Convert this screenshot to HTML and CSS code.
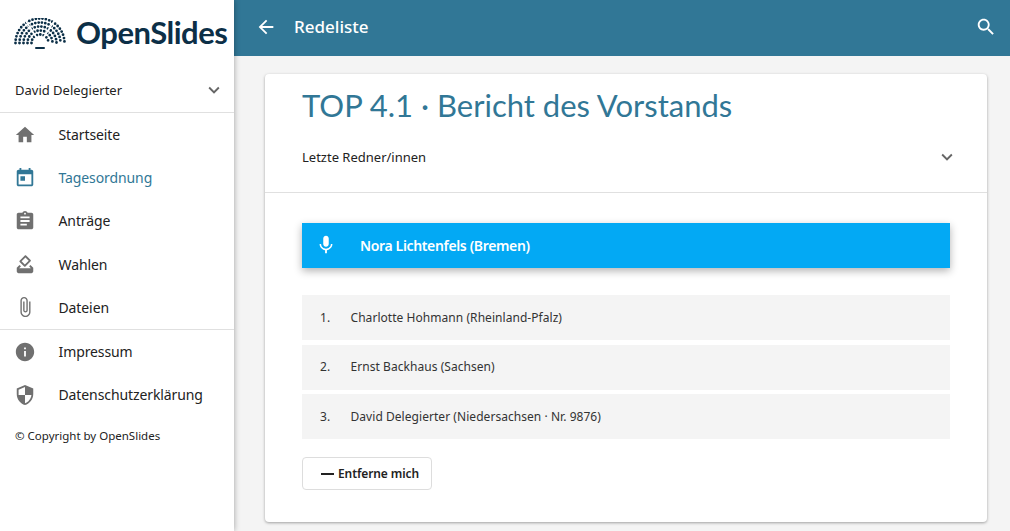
FILE: index.html
```html
<!DOCTYPE html>
<html>

<head>
  <meta charset="UTF-8">
  <meta name="viewport" content="width=device-width, initial-scale=1">
  <title>Redeliste</title>
  <link rel="stylesheet" href="styles.css">
</head>

<body>
  <aside class="sidebar">
    <div class="logo">
      <svg class="logo-mark" viewBox="0 0 52 34" width="52" height="34">
        <g fill="none" stroke="#0c2f47" stroke-width="2.8" stroke-linecap="round" stroke-dasharray="0 3.4">
          <path d="M1.5 25a24.5 24.5 0 0 1 49 0"/>
          <path d="M5.5 25a20.500 20.500 0 0 1 41 0"/>
          <path d="M9.500 25a16.500 16.500 0 0 1 33 0"/>
          <path d="M13.500 25a12.500 12.500 0 0 1 25 0"/>
          <path d="M17.500 25a8.500 8.500 0 0 1 17 0"/>
        </g>
        <g stroke="#fff" stroke-width="1.600">
          <path d="M26 25 10 0"/>
          <path d="M26 25 42 0"/>
        </g>
        <rect x="21" y="29" width="10" height="2" rx="1" fill="#0c2f47"/>
      </svg>
      <span class="logo-text">OpenSlides</span>
    </div>

    <div class="user">
      <span>David Delegierter</span>
      <svg class="icon-sm" viewBox="0 0 24 24"><path d="M7.410 8.590 12 13.170l4.590-4.580L18 10l-6 6-6-6z"/></svg>
    </div>

    <nav class="nav nav-main">
      <a class="nav-item">
        <svg class="icon" viewBox="0 0 24 24"><path d="M10 20v-6h4v6h5v-8h3L12 3 2 12h3v8z"/></svg>
        <span>Startseite</span>
      </a>
      <a class="nav-item active">
        <svg class="icon" viewBox="0 0 24 24"><path d="M19 3h-1V1h-2v2H8V1H6v2H5c-1.110 0-2 .9-2 2v14c0 1.100.89 2 2 2h14c1.100 0 2-.9 2-2V5c0-1.100-.9-2-2-2zm0 16H5V8h14v11zM7 10h5v5H7z"/></svg>
        <span>Tagesordnung</span>
      </a>
      <a class="nav-item">
        <svg class="icon" viewBox="0 0 24 24"><path d="M19 3h-4.180C14.400 1.840 13.300 1 12 1c-1.300 0-2.400.84-2.820 2H5c-1.100 0-2 .9-2 2v14c0 1.100.9 2 2 2h14c1.100 0 2-.9 2-2V5c0-1.100-.9-2-2-2zm-7 0c.55 0 1 .45 1 1s-.45 1-1 1-1-.45-1-1 .45-1 1-1zm2 14H7v-2h7v2zm3-4H7v-2h10v2zm0-4H7V7h10v2z"/></svg>
        <span>Anträge</span>
      </a>
      <a class="nav-item">
        <svg class="icon" viewBox="0 0 24 24"><path d="m18 13-1.500 1.500 1.900 2H5.600l2-2L6 13l-3 3v4c0 1.100.9 2 2 2h14c1.100 0 2-.9 2-2v-4l-3-3zm-6.900 1.700c.39.39 1.020.39 1.410 0l5.660-5.660c.39-.39.39-1.020 0-1.410L13.220 2.700c-.38-.4-1.010-.41-1.400-.02L6.150 8.340c-.39.39-.39 1.020 0 1.410l4.950 4.950zm1.410-9.900 3.540 3.540-4.250 4.240-3.530-3.530 4.240-4.250z"/></svg>
        <span>Wahlen</span>
      </a>
      <a class="nav-item">
        <svg class="icon" viewBox="0 0 24 24"><path d="M16.500 6v11.500c0 2.210-1.790 4-4 4s-4-1.790-4-4V5c0-1.380 1.120-2.500 2.500-2.500s2.500 1.120 2.500 2.500v10.500c0 .55-.45 1-1 1s-1-.45-1-1V6H10v9.500c0 1.380 1.120 2.500 2.500 2.500s2.500-1.120 2.500-2.500V5c0-2.210-1.790-4-4-4S7 2.790 7 5v12.500c0 3.040 2.460 5.500 5.500 5.500s5.500-2.460 5.500-5.500V6h-1.500z"/></svg>
        <span>Dateien</span>
      </a>
    </nav>

    <nav class="nav">
      <a class="nav-item">
        <svg class="icon" viewBox="0 0 24 24"><path d="M12 2C6.480 2 2 6.480 2 12s4.480 10 10 10 10-4.480 10-10S17.520 2 12 2zm1 15h-2v-6h2v6zm0-8h-2V7h2v2z"/></svg>
        <span>Impressum</span>
      </a>
      <a class="nav-item">
        <svg class="icon" viewBox="0 0 24 24"><path d="M12 1 3 5v6c0 5.550 3.840 10.740 9 12 5.160-1.260 9-6.450 9-12V5l-9-4zm0 10.990h7c-.53 4.120-3.280 7.790-7 8.940V12H5V6.300l7-3.110v8.800z"/></svg>
        <span>Datenschutzerklärung</span>
      </a>
    </nav>

    <div class="copyright">© Copyright by OpenSlides</div>
  </aside>

  <div class="main">
    <header class="topbar">
      <div class="topbar-left">
        <svg class="icon-white" viewBox="0 0 24 24"><path d="M20 11H7.830l5.590-5.590L12 4l-8 8 8 8 1.410-1.410L7.830 13H20v-2z"/></svg>
        <span class="topbar-title">Redeliste</span>
      </div>
      <svg class="icon-white" viewBox="0 0 24 24"><path d="M15.500 14h-.79l-.28-.27C15.410 12.590 16 11.110 16 9.500 16 5.910 13.090 3 9.500 3S3 5.910 3 9.500 5.910 16 9.500 16c1.610 0 3.090-.59 4.230-1.570l.27.28v.79l5 4.990L20.490 19l-4.990-5zm-6 0C7.010 14 5 11.990 5 9.500S7.010 5 9.500 5 14 7.010 14 9.500 11.990 14 9.500 14z"/></svg>
    </header>

    <main class="content">
      <section class="card">
        <div class="card-head">
          <h1>TOP 4.1 · Bericht des Vorstands</h1>
          <div class="last-speakers">
            <span>Letzte Redner/innen</span>
            <svg class="icon-sm" viewBox="0 0 24 24"><path d="M7.410 8.590 12 13.170l4.590-4.580L18 10l-6 6-6-6z"/></svg>
          </div>
        </div>
        <div class="card-body">
          <div class="current">
            <svg class="icon-mic" viewBox="0 0 24 24"><path d="M12 14c1.660 0 2.990-1.340 2.990-3L15 5c0-1.660-1.340-3-3-3S9 3.340 9 5v6c0 1.660 1.340 3 3 3zm5.300-3c0 3-2.540 5.100-5.300 5.100S6.700 14 6.700 11H5c0 3.410 2.720 6.230 6 6.720V21h2v-3.280c3.280-.48 6-3.300 6-6.720h-1.700z"/></svg>
            <span>Nora Lichtenfels (Bremen)</span>
          </div>
          <ol class="waiting">
            <li><span class="num">1.</span><span>Charlotte Hohmann (Rheinland-Pfalz)</span></li>
            <li><span class="num">2.</span><span>Ernst Backhaus (Sachsen)</span></li>
            <li><span class="num">3.</span><span>David Delegierter (Niedersachsen · Nr. 9876)</span></li>
          </ol>
          <button class="remove-btn"><span class="dash"></span>Entferne mich</button>
        </div>
      </section>
    </main>
  </div>
</body>

</html>
```

FILE: styles.css
```css
html, body {
  height: 100%;
}

body {
  margin: 0;
  display: flex;
  overflow: hidden;
  font-family: 'Noto Sans', 'Open Sans', sans-serif;
  font-size: 14px;
  color: #222;
  background-color: #f4f4f4;
}

svg {
  display: block;
  flex-shrink: 0;
  fill: currentColor;
}

.sidebar {
  width: 234px;
  flex-shrink: 0;
  background-color: #fff;
  box-shadow: 0 0 6px rgba(0, 0, 0, 0.35);
  position: relative;
  z-index: 2;
}

.logo {
  height: 66px;
  display: flex;
  align-items: flex-start;
  padding: 13px 0 0 14px;
  box-sizing: border-box;
  gap: 10px;
}

.logo-mark {
  margin-top: 5px;
}

.logo-text {
  font-family: 'Lato', sans-serif;
  font-size: 31px;
  font-weight: 700;
  letter-spacing: -0.5px;
  line-height: 38px;
  color: #0c2f47;
}

.user {
  height: 47px;
  padding: 1px 9px 0 15px;
  display: flex;
  justify-content: space-between;
  align-items: center;
  box-sizing: border-box;
  font-size: 13px;
  border-bottom: 1px solid #e0e0e0;
}

.icon-sm {
  width: 22px;
  height: 22px;
  color: #666;
}

.nav {
  display: flex;
  flex-direction: column;
}

.nav-main {
  border-bottom: 1px solid #e0e0e0;
}

.nav-item {
  height: 43.2px;
  display: flex;
  align-items: center;
  padding-left: 14px;
  gap: 22.500px;
  letter-spacing: -0.1px;
}

.nav-item .icon {
  width: 22px;
  height: 22px;
  color: #707070;
}

.nav-item.active,
.nav-item.active .icon {
  color: #317796;
}

.copyright {
  margin: 12px 0 0 15px;
  font-size: 11.500px;
}

.main {
  flex: 1;
  min-width: 0;
  display: flex;
  flex-direction: column;
}

.topbar {
  height: 56px;
  flex-shrink: 0;
  box-sizing: border-box;
  background-color: #317796;
  color: #fff;
  display: flex;
  justify-content: space-between;
  align-items: center;
  padding: 0 13px 2px 21px;
}

.topbar-left {
  display: flex;
  align-items: center;
  gap: 17px;
}

.icon-white {
  width: 22px;
  height: 22px;
}

.topbar-title {
  font-size: 17px;
  font-weight: 500;
  padding-bottom: 2px;
}

.content {
  padding: 18px 23px 0 31px;
}

.card {
  height: 448px;
  background-color: #fff;
  border-radius: 4px;
  box-shadow: 0 1px 3px rgba(0, 0, 0, 0.35);
}

.card-head {
  padding: 0 29px 0 37px;
  border-bottom: 1px solid #e0e0e0;
  box-sizing: border-box;
  height: 119px;
}

.card-head h1 {
  margin: 0;
  padding-top: 11px;
  font-family: 'Lato', sans-serif;
  font-size: 31px;
  font-weight: 400;
  line-height: 40px;
  color: #317796;
}

.last-speakers {
  margin-top: 21px;
  display: flex;
  justify-content: space-between;
  align-items: center;
  font-size: 13px;
}

.card-body {
  padding: 30px 37px 0 37px;
}

.current {
  height: 45px;
  background-color: #03a9f4;
  color: #fff;
  font-weight: 600;
  letter-spacing: -0.35px;
  display: flex;
  align-items: center;
  padding: 0 0 1px 13px;
  box-sizing: border-box;
  gap: 23px;
  box-shadow: 0 3px 8px rgba(0, 0, 0, 0.3);
}

.icon-mic {
  width: 22px;
  height: 22px;
}

.waiting {
  list-style: none;
  margin: 27px 0 0;
  padding: 0;
  display: flex;
  flex-direction: column;
  gap: 4.500px;
}

.waiting li {
  height: 45px;
  background-color: #f4f4f4;
  display: flex;
  align-items: center;
  padding: 0 0 1px 18px;
  box-sizing: border-box;
  font-size: 12px;
  letter-spacing: 0.05px;
  color: #333;
}

.num {
  width: 30.500px;
}

.remove-btn {
  margin-top: 18px;
  height: 33px;
  width: 130px;
  display: flex;
  align-items: center;
  padding: 0 0 0 18px;
  gap: 4px;
  background-color: #fff;
  border: 1px solid #ddd;
  border-radius: 4px;
  font-family: inherit;
  font-size: 12px;
  font-weight: 600;
  letter-spacing: -0.1px;
  color: #222;
}

.dash {
  width: 13px;
  height: 2px;
  background-color: #222;
}
```
